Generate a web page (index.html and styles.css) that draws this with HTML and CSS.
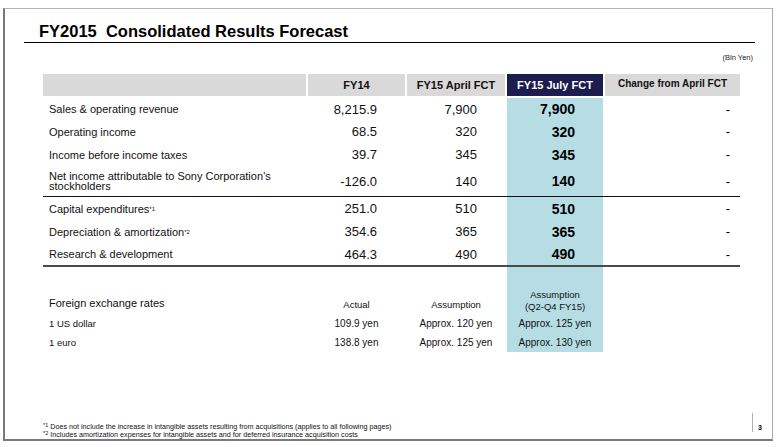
FILE: index.html
```html
<!DOCTYPE html>
<html>
<head>
<meta charset="utf-8">
<title>FY2015 Consolidated Results Forecast</title>
<link rel="stylesheet" href="styles.css">
</head>
<body>
<div class="slide">
  <h1 class="title">FY2015  Consolidated Results Forecast</h1>
  <div class="units">(Bln Yen)</div>
  <div class="table">
    <div class="row head">
      <div></div>
      <div>FY14</div>
      <div>FY15 April FCT</div>
      <div class="jul">FY15 July FCT</div>
      <div class="chg">Change from April FCT</div>
    </div>
    <div class="row data r1">
      <div class="lbl">Sales &amp; operating revenue</div>
      <div class="num">8,215.9</div>
      <div class="num">7,900</div>
      <div class="num jul">7,900</div>
      <div class="chg">-</div>
    </div>
    <div class="row data">
      <div class="lbl">Operating income</div>
      <div class="num">68.5</div>
      <div class="num">320</div>
      <div class="num jul">320</div>
      <div class="chg">-</div>
    </div>
    <div class="row data">
      <div class="lbl">Income before income taxes</div>
      <div class="num">39.7</div>
      <div class="num">345</div>
      <div class="num jul">345</div>
      <div class="chg">-</div>
    </div>
    <div class="row data tall sep">
      <div class="lbl two">Net income attributable to Sony Corporation’s<br>stockholders</div>
      <div class="num">-126.0</div>
      <div class="num">140</div>
      <div class="num jul">140</div>
      <div class="chg">-</div>
    </div>
    <div class="row data">
      <div class="lbl">Capital expenditures<sup class="mk">*1</sup></div>
      <div class="num">251.0</div>
      <div class="num">510</div>
      <div class="num jul">510</div>
      <div class="chg">-</div>
    </div>
    <div class="row data">
      <div class="lbl">Depreciation &amp; amortization<sup class="mk">*2</sup></div>
      <div class="num">354.6</div>
      <div class="num">365</div>
      <div class="num jul">365</div>
      <div class="chg">-</div>
    </div>
    <div class="row data last">
      <div class="lbl">Research &amp; development</div>
      <div class="num">464.3</div>
      <div class="num">490</div>
      <div class="num jul">490</div>
      <div class="chg">-</div>
    </div>
    <div class="row fxhead">
      <div class="fxlbl">Foreign exchange rates</div>
      <div class="fxc">Actual</div>
      <div class="fxc">Assumption</div>
      <div class="fxc jul2">Assumption<br>(Q2-Q4 FY15)</div>
      <div></div>
    </div>
    <div class="row fxrow us">
      <div class="fxsub">1 US dollar</div>
      <div class="fxv">109.9 yen</div>
      <div class="fxv">Approx. 120 yen</div>
      <div class="fxv jul2">Approx. 125 yen</div>
      <div></div>
    </div>
    <div class="row fxrow eu">
      <div class="fxsub">1 euro</div>
      <div class="fxv">138.8 yen</div>
      <div class="fxv">Approx. 125 yen</div>
      <div class="fxv jul2">Approx. 130 yen</div>
      <div></div>
    </div>
  </div>
  <div class="footer">
    <div class="notes">
      <div><sup class="fm">*1</sup> Does not include the increase in intangible assets resulting from acquisitions (applies to all following pages)</div>
      <div><sup class="fm">*2</sup> Includes amortization expenses for intangible assets and for deferred insurance acquisition costs</div>
    </div>
    <div class="pg">3</div>
  </div>
</div>
</body>
</html>
```
FILE: styles.css
```css
html, body {
  margin: 0;
  padding: 0;
  background: #ffffff;
}

body {
  font-family: "Liberation Sans", Arial, sans-serif;
  color: #000000;
}

.slide {
  margin: 8px 0 0 3px;
  width: 770px;
  height: 433px;
  box-sizing: border-box;
  border-top: 1px solid #b4b4b4;
  border-right: 1px solid #a8a8a8;
  border-left: 2px solid #7a7a7a;
  border-bottom: 2px solid #7a7a7a;
  display: flex;
  flex-direction: column;
}

.title {
  margin: 0 0 0 19px;
  width: 731px;
  box-sizing: border-box;
  padding: 13px 0 1px 15px;
  font-size: 16.5px;
  font-weight: bold;
  line-height: 19px;
  white-space: pre;
  border-bottom: 1px solid #000000;
}

.units {
  margin: 10px 0 0 38px;
  width: 710px;
  text-align: right;
  font-size: 7.5px;
  line-height: 10px;
  color: #222;
}

.table {
  margin: 11px 0 0 38px;
  width: 697px;
}

.row {
  display: grid;
  grid-template-columns: 263px 97px 98px 96px 135px;
  column-gap: 2px;
}

.head {
  height: 22px;
  margin-bottom: 2px;
}

.head > div {
  background: #d9d9d9;
  display: flex;
  align-items: center;
  justify-content: center;
  font-weight: bold;
  font-size: 11px;
  color: #111;
}

.head > .jul {
  background: #1d1c4e;
  color: #ffffff;
}

.head > .chg {
  font-size: 10px;
  padding-bottom: 3px;
}

.data {
  height: 23px;
}

.data.r1 {
  height: 22px;
}

.data.tall {
  height: 30px;
}

.data.sep {
  border-bottom: 1px solid #111;
}

.data.last {
  height: 22px;
  border-bottom: 2px solid #4a4a4a;
}

.data > div {
  display: flex;
  align-items: center;
}

.lbl {
  padding-left: 6px;
  font-size: 11px;
  color: #111;
}

.lbl.two {
  line-height: 10.5px;
}

.num {
  justify-content: flex-end;
  padding-right: 28px;
  font-size: 13px;
  color: #111;
}

.num.jul {
  background: #b7dde4;
  font-weight: bold;
  font-size: 14px;
  color: #000;
}

.data > .chg {
  justify-content: flex-end;
  padding-right: 10px;
  font-size: 13px;
}

.mk {
  font-size: 6px;
  line-height: 0;
  vertical-align: 4px;
}

.fxhead {
  height: 47px;
}

.fxhead > div {
  display: flex;
  flex-direction: column;
  justify-content: flex-end;
  text-align: center;
}

.fxlbl {
  padding-left: 6px;
  padding-bottom: 4px;
  font-size: 11px;
  line-height: 13px;
  text-align: left !important;
  color: #111;
}

.fxc {
  font-size: 9.5px;
  line-height: 12px;
  padding-bottom: 3px;
  color: #111;
}

.fxc.jul2 {
  line-height: 11.5px;
  padding-bottom: 2px;
}

.jul2 {
  background: #b7dde4;
}

.fxrow.us {
  height: 20px;
}

.fxrow.eu {
  height: 18px;
}

.fxrow > div {
  display: flex;
  align-items: center;
  font-size: 9.5px;
  line-height: 12px;
  color: #111;
}

.fxrow > .fxv {
  font-size: 10px;
}

.fxrow.eu > div {
  align-items: flex-start;
  padding-top: 3px;
}

.fxsub {
  padding-left: 6px;
}

.fxv {
  justify-content: center;
}

.footer {
  margin-top: auto;
  height: 26px;
  padding-left: 38px;
  display: flex;
  justify-content: space-between;
  align-items: flex-end;
}

.notes {
  font-size: 7.2px;
  line-height: 8px;
  color: #111;
}

.fm {
  font-size: 5.5px;
  line-height: 0;
  vertical-align: 2px;
}

.pg {
  align-self: flex-start;
  height: 19px;
  margin-right: 10px;
  padding-left: 5px;
  border-left: 1px solid #b0b0b0;
  display: flex;
  align-items: flex-end;
  font-size: 7px;
  font-weight: bold;
  line-height: 8px;
}
```
